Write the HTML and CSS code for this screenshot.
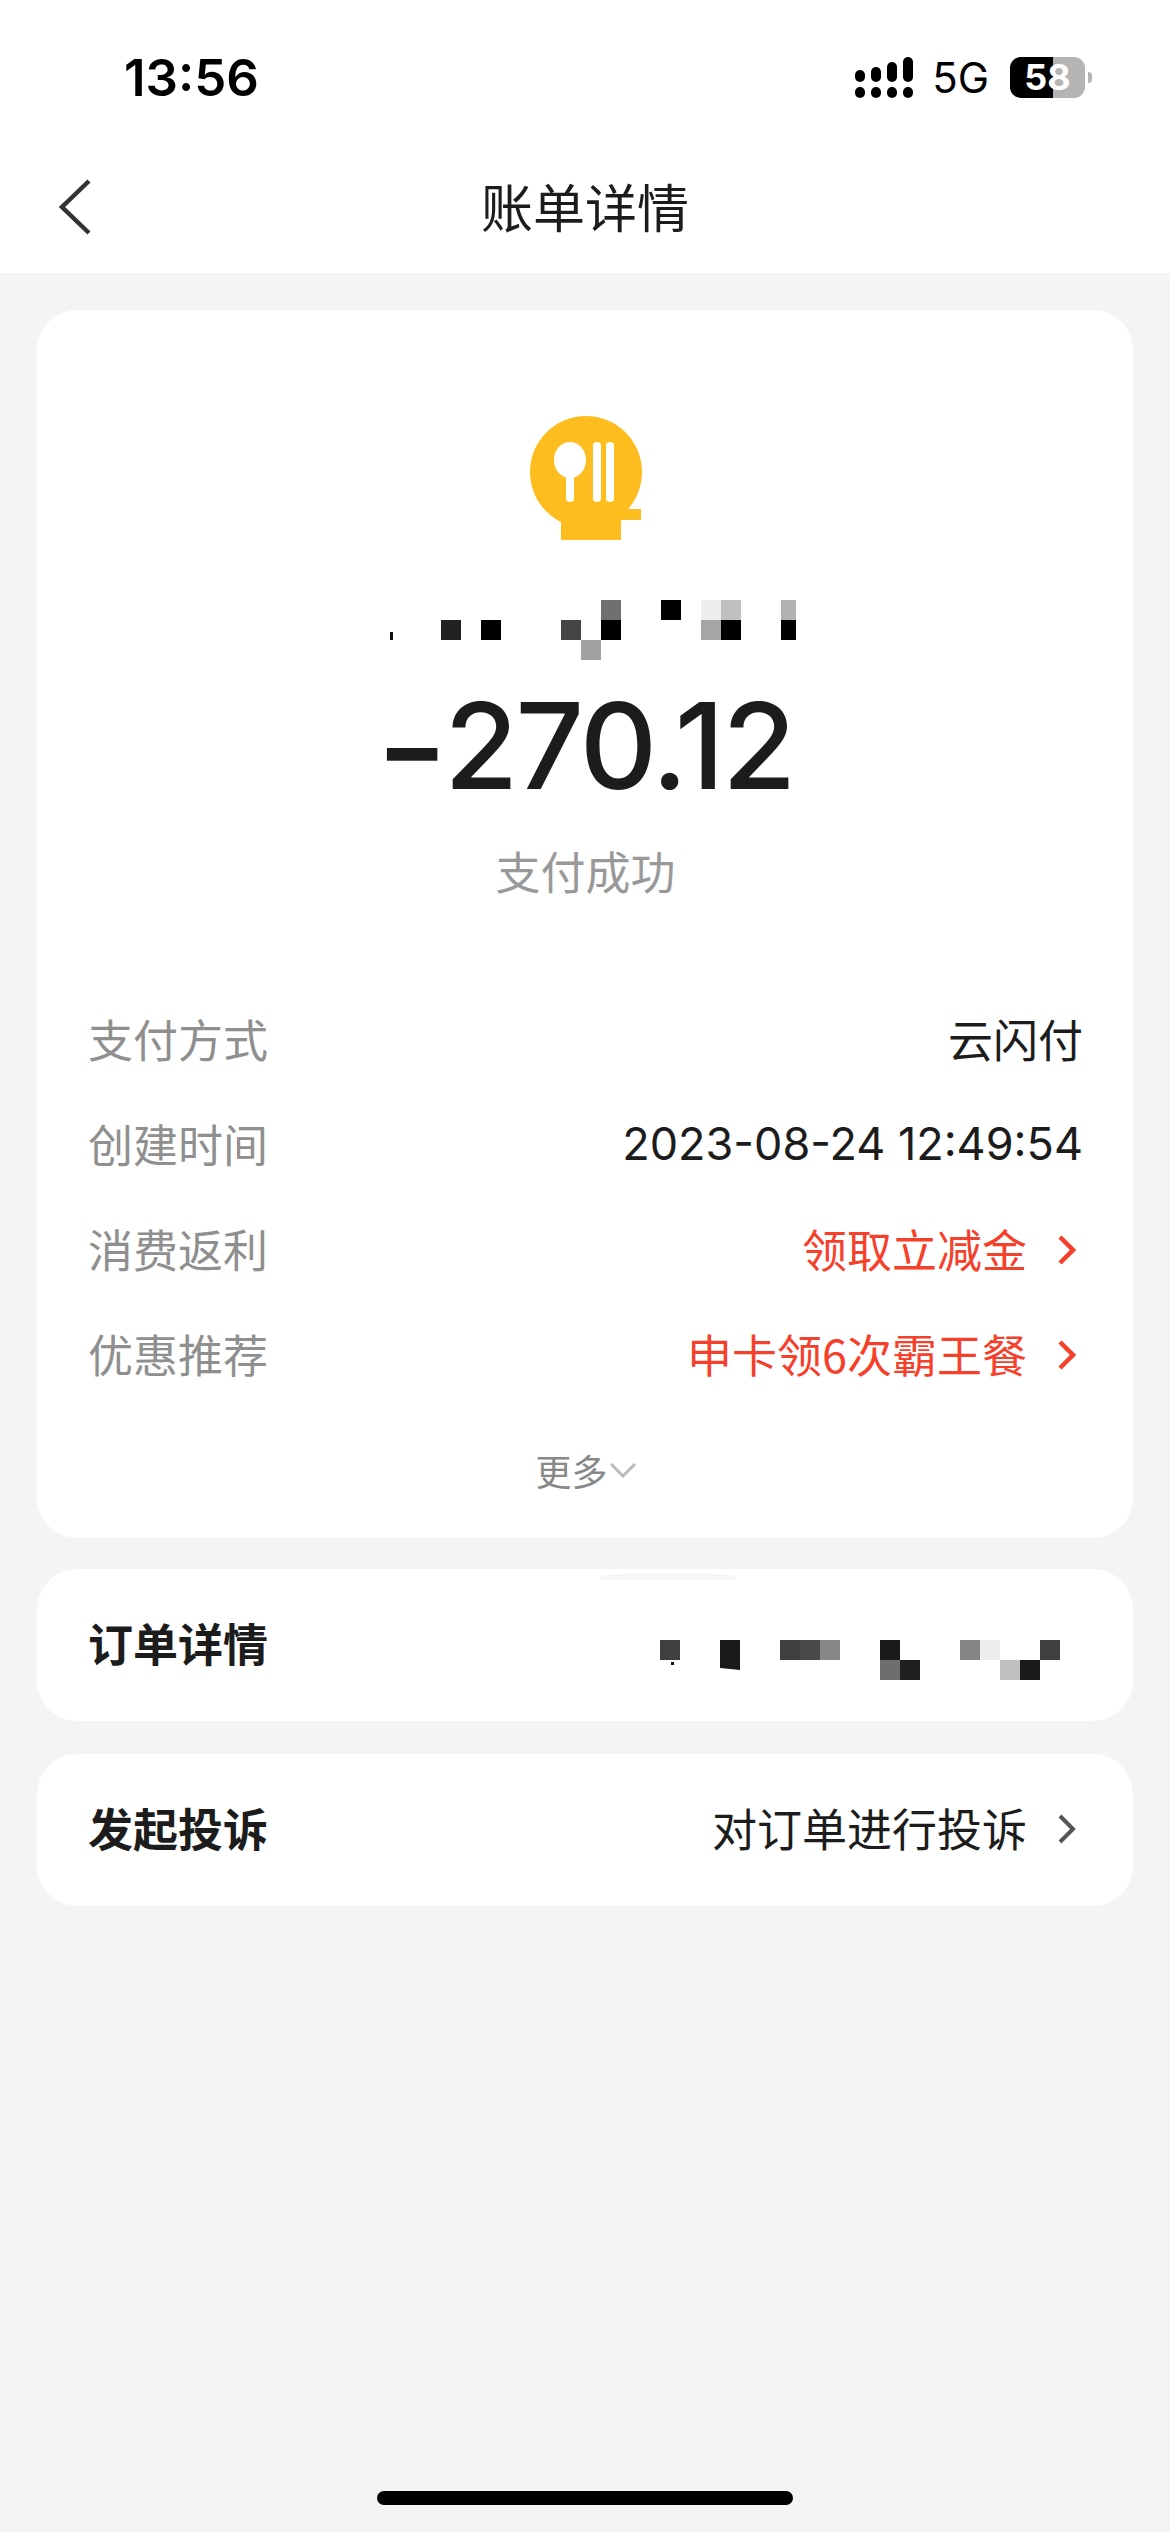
FILE: index.html

```html
<!DOCTYPE html>
<html lang="zh-CN">

<head>
    <meta charset="UTF-8">
    <meta name="viewport" content="width=device-width, initial-scale=1.0">
    <title>账单详情</title>
    <link rel="stylesheet" href="styles.css">
</head>

<body>
    <!-- Status Bar -->
    <div class="status-bar">
        <div class="time">13:56</div>
        <div class="status-icons">
            <svg class="signal" viewBox="0 0 58 41" width="58" height="41">
                <rect x="0" y="13" width="10" height="12" rx="5" />
                <rect x="16" y="10" width="10" height="15" rx="5" />
                <rect x="32" y="5" width="10" height="20" rx="5" />
                <rect x="48" y="0" width="10" height="25" rx="5" />
                <rect x="0" y="30" width="10" height="11" rx="5" />
                <rect x="16" y="30" width="10" height="11" rx="5" />
                <rect x="32" y="30" width="10" height="11" rx="5" />
                <rect x="48" y="30" width="10" height="11" rx="5" />
            </svg>
            <span class="network">5G</span>
            <div class="battery">58</div>
            <div class="battery-cap"></div>
        </div>
    </div>

    <!-- Nav Bar -->
    <div class="nav-bar">
        <svg class="back" viewBox="0 0 34 56" width="34" height="56">
            <path d="M31 2 L4 28 L31 54" fill="none" stroke="#333" stroke-width="4.5" />
        </svg>
        <h1>账单详情</h1>
    </div>

    <!-- Bill Card -->
    <div class="card bill-card">
        <svg class="merchant-icon" viewBox="529 416 112 124" width="112" height="124">
            <circle cx="585" cy="472" r="56" fill="#febd1e" />
            <rect x="560" y="520" width="60" height="20" fill="#febd1e" />
            <rect x="600" y="509" width="40" height="11" fill="#febd1e" />
            <ellipse cx="569" cy="460" rx="16" ry="18" fill="#fff" />
            <rect x="565" y="470" width="8" height="32" rx="4" fill="#fff" />
            <rect x="592" y="442" width="8" height="60" rx="4" fill="#fff" />
            <rect x="605" y="442" width="8" height="60" rx="4" fill="#fff" />
        </svg>

        <svg class="mosaic" viewBox="375 600 420 60" width="420" height="60">
            <rect x="389" y="632" width="3" height="8" fill="#111" />
            <rect x="440" y="620" width="20" height="20" fill="#222" />
            <rect x="480" y="620" width="20" height="20" fill="#000" />
            <rect x="560" y="620" width="20" height="20" fill="#444" />
            <rect x="580" y="640" width="20" height="20" fill="#a0a0a0" />
            <rect x="600" y="600" width="20" height="20" fill="#707070" />
            <rect x="600" y="620" width="20" height="20" fill="#000" />
            <rect x="660" y="600" width="20" height="20" fill="#000" />
            <rect x="700" y="600" width="20" height="20" fill="#eee" />
            <rect x="700" y="620" width="20" height="20" fill="#a5a5a5" />
            <rect x="720" y="600" width="20" height="20" fill="#c0c0c0" />
            <rect x="720" y="620" width="20" height="20" fill="#000" />
            <rect x="780" y="600" width="20" height="20" fill="#b2b2b2" />
            <rect x="780" y="620" width="20" height="20" fill="#000" />
        </svg>

        <div class="amount"><span class="minus">−</span>270.12</div>
        <div class="pay-status">支付成功</div>

        <div class="info-list">
            <div class="info-row">
                <span class="label">支付方式</span>
                <span class="value">云闪付</span>
            </div>
            <div class="info-row">
                <span class="label">创建时间</span>
                <span class="value">2023-08-24 12:49:54</span>
            </div>
            <div class="info-row">
                <span class="label">消费返利</span>
                <span class="value link">领取立减金
                    <svg class="chevron" viewBox="0 0 18 30" width="18" height="30">
                        <path d="M2 2 L15 15 L2 28" fill="none" stroke="currentColor" stroke-width="4.5" />
                    </svg>
                </span>
            </div>
            <div class="info-row">
                <span class="label">优惠推荐</span>
                <span class="value link">申卡领6次霸王餐
                    <svg class="chevron" viewBox="0 0 18 30" width="18" height="30">
                        <path d="M2 2 L15 15 L2 28" fill="none" stroke="currentColor" stroke-width="4.5" />
                    </svg>
                </span>
            </div>
        </div>

        <div class="more">更多
            <svg viewBox="0 0 26 16" width="26" height="16">
                <path d="M1 2 L13 14 L25 2" fill="none" stroke="#bbb" stroke-width="3" />
            </svg>
        </div>
    </div>

    <!-- Order Detail -->
    <div class="card row-card order-card">
        <div class="smudge"></div>
        <span class="row-title">订单详情</span>
        <svg class="mosaic" viewBox="660 1640 400 40" width="400" height="40">
            <rect x="660" y="1640" width="20" height="20" fill="#3f3f3f" />
            <rect x="671" y="1662" width="3" height="3" fill="#111" />
            <path d="M720 1640 H740 V1670 L720 1668 Z" fill="#1a1a1a" />
            <rect x="780" y="1640" width="20" height="20" fill="#404040" />
            <rect x="800" y="1640" width="20" height="20" fill="#4a4a4a" />
            <rect x="820" y="1640" width="20" height="20" fill="#888" />
            <rect x="880" y="1640" width="20" height="20" fill="#1a1a1a" />
            <rect x="880" y="1660" width="20" height="20" fill="#6e6e6e" />
            <rect x="900" y="1660" width="20" height="20" fill="#1f1f1f" />
            <rect x="960" y="1640" width="20" height="20" fill="#848484" />
            <rect x="980" y="1640" width="20" height="20" fill="#ececec" />
            <rect x="1000" y="1660" width="20" height="20" fill="#c0c0c0" />
            <rect x="1020" y="1660" width="20" height="20" fill="#1a1a1a" />
            <rect x="1040" y="1640" width="20" height="20" fill="#404040" />
        </svg>
    </div>

    <!-- Complaint -->
    <div class="card row-card">
        <span class="row-title">发起投诉</span>
        <span class="value">对订单进行投诉
            <svg class="chevron grey" viewBox="0 0 18 30" width="18" height="30">
                <path d="M2 2 L15 15 L2 28" fill="none" stroke="currentColor" stroke-width="4" />
            </svg>
        </span>
    </div>

    <div class="home-indicator"></div>
</body>

</html>
```

FILE: styles.css

```css
* {
    margin: 0;
    padding: 0;
    box-sizing: border-box;
}

body {
    font-family: "Noto Sans CJK SC", "Inter", sans-serif;
    background-color: #f4f4f4;
    color: #1c1c1c;
    display: flex;
    flex-direction: column;
    min-height: 2532px;
}

/* status bar */
.status-bar {
    height: 154px;
    background-color: #fff;
    display: flex;
    justify-content: space-between;
    align-items: center;
    padding: 0 78px 0 124px;
}

.time {
    font-family: "Inter", sans-serif;
    font-size: 51px;
    font-weight: 600;
    color: #000;
}

.status-icons {
    display: flex;
    align-items: center;
}

.network {
    font-family: "Inter", sans-serif;
    font-size: 42px;
    margin-left: 19px;
    color: #000;
}

.battery {
    width: 75px;
    height: 41px;
    margin-left: 21px;
    border-radius: 11px;
    background: linear-gradient(to right, #000 57%, #b4b4b4 57%);
    color: #fff;
    font-family: "Inter", sans-serif;
    font-size: 36px;
    font-weight: 700;
    line-height: 41px;
    text-align: center;
}

.battery-cap {
    width: 4px;
    height: 11px;
    margin-left: 3px;
    border-radius: 0 4px 4px 0;
    background-color: #b4b4b4;
}

/* nav bar */
.nav-bar {
    height: 119px;
    background-color: #fff;
    display: flex;
    align-items: center;
    justify-content: center;
    position: relative;
    padding-bottom: 16px;
}

.nav-bar h1 {
    font-size: 52px;
    font-weight: 400;
}

.back {
    position: absolute;
    left: 58px;
    top: 25px;
}

/* cards */
.card {
    background-color: #fff;
    border-radius: 40px;
    margin: 0 37px;
}

.bill-card {
    margin-top: 37px;
    height: 1228px;
    padding: 106px 50px 0 51px;
    display: flex;
    flex-direction: column;
    align-items: center;
}

.merchant-icon {
    display: block;
}

.bill-card .mosaic {
    display: block;
    margin-top: 60px;
}

.amount {
    font-family: "Inter", sans-serif;
    font-size: 120px;
    font-weight: 500;
    letter-spacing: -2.5px;
    line-height: 140px;
    margin-top: 16px;
}

.minus {
    font-size: 102px;
    font-weight: 700;
    line-height: 0;
    vertical-align: 5px;
}

.pay-status {
    font-size: 45px;
    line-height: 60px;
    color: #999;
    margin-top: 25px;
}

.info-list {
    width: 100%;
    margin-top: 85px;
}

.info-row {
    height: 105px;
    display: flex;
    justify-content: space-between;
    align-items: center;
    font-size: 45px;
}

.label {
    color: #8f8f8f;
}

.value {
    display: flex;
    align-items: center;
    font-family: "Inter", "Noto Sans CJK SC", sans-serif;
    font-size: 45px;
    color: #1c1c1c;
}

.value.link {
    color: #f5402c;
    font-family: "Noto Sans CJK SC", sans-serif;
}

.chevron {
    margin-left: 31px;
    margin-right: 7px;
    margin-top: 3px;
}

.chevron.grey {
    color: #555;
}

.more {
    display: flex;
    align-items: center;
    font-size: 36px;
    color: #888;
    margin-top: 39px;
    line-height: 50px;
}

.more svg {
    margin-left: 2px;
}

/* single line cards */
.row-card {
    height: 152px;
    margin-top: 33px;
    padding: 0 50px 0 51px;
    display: flex;
    justify-content: space-between;
    align-items: center;
    position: relative;
}

.row-card > span {
    margin-bottom: 5px;
}

.order-card {
    margin-top: 31px;
}

.order-card .mosaic {
    margin-right: 23px;
    margin-top: 30px;
}

.row-title {
    font-size: 45px;
    font-weight: 700;
}

.smudge {
    position: absolute;
    left: 563px;
    top: 4px;
    width: 136px;
    height: 7px;
    border-radius: 50% 50% 0 0;
    background-color: #f6f6f6;
}

.home-indicator {
    width: 416px;
    height: 14px;
    border-radius: 7px;
    background-color: #000;
    margin: auto auto 27px;
}
```
